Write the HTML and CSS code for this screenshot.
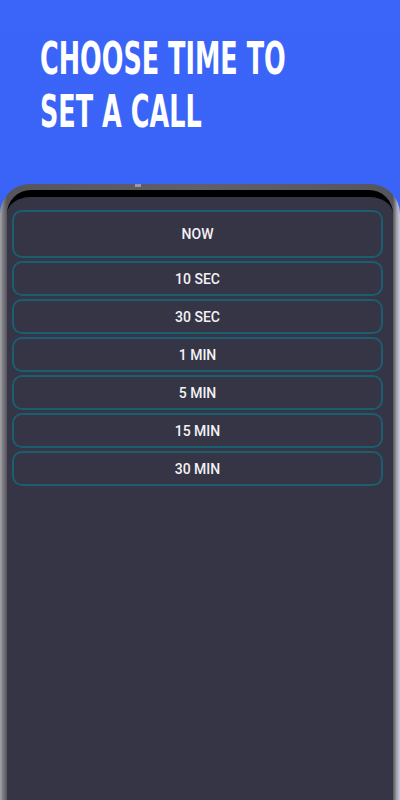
FILE: index.html
```html
<!DOCTYPE html>
<html lang="en">
<head>
    <meta charset="UTF-8">
    <meta name="viewport" content="width=device-width, initial-scale=1.0">
    <title>Choose time to set a call</title>
    <link rel="stylesheet" href="styles.css">
</head>
<body>
    <header class="hero">
        <h1 class="hero-title">Choose time to<br>set a call</h1>
    </header>

    <div class="phone">
        <span class="phone-notch"></span>
        <div class="screen">
            <ul class="times">
                <li class="time time-main">NOW</li>
                <li class="time">10 SEC</li>
                <li class="time">30 SEC</li>
                <li class="time">1 MIN</li>
                <li class="time">5 MIN</li>
                <li class="time">15 MIN</li>
                <li class="time">30 MIN</li>
            </ul>
        </div>
    </div>
</body>
</html>
```

FILE: styles.css
```css
html, body {
    height: 100%;
}
body {
    margin: 0;
    background: linear-gradient(#3b65f8, #3660f5);
    font-family: Roboto, "Noto Sans", sans-serif;
    overflow: hidden;
    display: flex;
    flex-direction: column;
}
.hero {
    height: 184px;
    padding: 32px 0 0 40px;
    box-sizing: border-box;
}
.hero-title {
    margin: 0;
    color: #fff;
    font-family: "DejaVu Sans", sans-serif;
    font-weight: bold;
    font-stretch: condensed;
    font-size: 45px;
    line-height: 53px;
    text-transform: uppercase;
    transform: scaleX(0.63);
    transform-origin: left top;
    white-space: nowrap;
}
.phone {
    position: relative;
    flex: 1;
    border-radius: 30px 30px 0 0;
    padding: 6px 7px 0;
    background: linear-gradient(90deg, #a4a4aa 0, #7c7c82 3px, #55555b 7px, #606066 50%, #55555b calc(100% - 7px), #a8a8b2 calc(100% - 3px), #c8c8e2 100%);
}
.phone-notch {
    position: absolute;
    top: 0;
    left: 135px;
    width: 6px;
    height: 3px;
    background: #9a9aa6;
}
.screen {
    height: 100%;
    box-sizing: border-box;
    background: #363546;
    border-top: 7px solid #000;
    border-radius: 24px 24px 0 0;
    padding: 13px 10px 0 5px;
}
.times {
    list-style: none;
    margin: 0;
    padding: 0;
    display: flex;
    flex-direction: column;
    gap: 3px;
}
.time {
    height: 35px;
    box-sizing: border-box;
    display: flex;
    align-items: center;
    justify-content: center;
    border: 2px solid #1b5e6f;
    border-radius: 10px;
    color: #f2f2f4;
    font-size: 14px;
    font-weight: 500;
}
.time-main {
    height: 48px;
}
```
